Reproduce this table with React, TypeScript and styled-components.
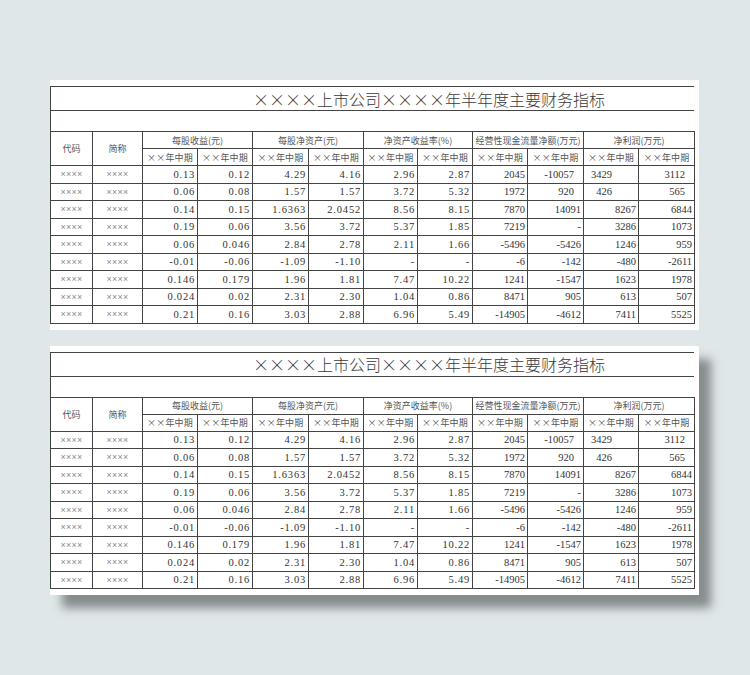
import React from "react";
import styled, { createGlobalStyle } from "styled-components";

const Global = createGlobalStyle`
  html, body { margin: 0; padding: 0; background: #e0e7e8; }
  body { width: 750px; height: 675px; overflow: hidden; }
`;

const Page = styled.div`
  display: flex;
  flex-direction: column;
  gap: 16px;
  padding: 80px 0 0 50px;
`;

const Card = styled.div<{ $shadow?: boolean }>`
  width: 649px;
  background: #ffffff;
  padding: 6px 5px 6px 0;
  box-sizing: border-box;
  box-shadow: ${(p) => (p.$shadow ? "12px 13px 9px rgba(45, 52, 52, 0.5)" : "none")};
`;

const TitleRow = styled.div`
  height: 25px;
  box-sizing: border-box;
  border-top: 1px solid #444;
  border-bottom: 1px solid #444;
  border-left: 1px solid #444;
  display: flex;
  align-items: center;
  padding-left: 202px;
  font-family: "Noto Sans CJK SC", sans-serif;
  font-weight: 300;
  font-size: 16px;
  color: #3a3a3a;
  white-space: nowrap;
`;

const BlankRow = styled.div`
  height: 20px;
  border-left: 1px solid #444;
`;

const cols = [42, 50, 55, 55, 56, 55, 54, 55, 55, 56, 55, 56];

const Grid = styled.div`
  display: grid;
  grid-template-columns: ${cols.map((c) => `${c}px`).join(" ")};
  grid-template-rows: 17px 17px repeat(9, 17.5px);
  border-top: 1px solid #444;
  border-left: 1px solid #444;
  width: max-content;
`;

const Cell = styled.div<{ $cspan?: number; $rspan?: number }>`
  box-sizing: border-box;
  border-right: 1px solid #444;
  border-bottom: 1px solid #444;
  display: flex;
  align-items: center;
  overflow: hidden;
  white-space: nowrap;
  grid-column: ${(p) => (p.$cspan ? `span ${p.$cspan}` : "auto")};
  grid-row: ${(p) => (p.$rspan ? `span ${p.$rspan}` : "auto")};
`;

const HeadCell = styled(Cell)`
  justify-content: center;
  font-family: "Noto Sans CJK SC", sans-serif;
  font-size: 9px;
  color: #555;
`;

const PeriodCell = styled(HeadCell)`
  letter-spacing: 0.2px;
`;

const MarkCell = styled(Cell)`
  justify-content: center;
  font-family: "Liberation Sans", sans-serif;
  font-size: 9px;
  color: #8a8a8a;
  letter-spacing: 0.3px;
`;

const NumCell = styled(Cell)<{ $dec?: boolean; $pad?: number }>`
  justify-content: flex-end;
  padding-right: ${(p) => p.$pad ?? 2}px;
  font-family: "Liberation Serif", serif;
  font-size: 10.5px;
  color: #333;
  letter-spacing: ${(p) => (p.$dec ? "0.8px" : "0")};
`;

const groups = [
  "每股收益(元)",
  "每股净资产(元)",
  "净资产收益率(%)",
  "经营性现金流量净额(万元)",
  "净利润(万元)",
];

const rows = [
  ["0.13", "0.12", "4.29", "4.16", "2.96", "2.87", "2045", "-10057", "3429", "3112"],
  ["0.06", "0.08", "1.57", "1.57", "3.72", "5.32", "1972", "920", "426", "565"],
  ["0.14", "0.15", "1.6363", "2.0452", "8.56", "8.15", "7870", "14091", "8267", "6844"],
  ["0.19", "0.06", "3.56", "3.72", "5.37", "1.85", "7219", "-", "3286", "1073"],
  ["0.06", "0.046", "2.84", "2.78", "2.11", "1.66", "-5496", "-5426", "1246", "959"],
  ["-0.01", "-0.06", "-1.09", "-1.10", "-", "-", "-6", "-142", "-480", "-2611"],
  ["0.146", "0.179", "1.96", "1.81", "7.47", "10.22", "1241", "-1547", "1623", "1978"],
  ["0.024", "0.02", "2.31", "2.30", "1.04", "0.86", "8471", "905", "613", "507"],
  ["0.21", "0.16", "3.03", "2.88", "6.96", "5.49", "-14905", "-4612", "7411", "5525"],
];

const padFor = (r: number, c: number): number | undefined => {
  if (r > 1) return undefined;
  if (c === 7) return 9;
  if (c === 8) return 26;
  if (c === 9) return 9;
  return undefined;
};

function FinanceTable({ shadow }: { shadow?: boolean }) {
  return (
    <Card $shadow={shadow}>
      <TitleRow>××××上市公司××××年半年度主要财务指标</TitleRow>
      <BlankRow />
      <Grid>
        <HeadCell $rspan={2}>代码</HeadCell>
        <HeadCell $rspan={2}>简称</HeadCell>
        {groups.map((g) => (
          <HeadCell key={g} $cspan={2}>
            {g}
          </HeadCell>
        ))}
        {Array.from({ length: 10 }).map((_, i) => (
          <PeriodCell key={`p${i}`}>××年中期</PeriodCell>
        ))}
        {rows.map((row, r) => (
          <React.Fragment key={r}>
            <MarkCell>××××</MarkCell>
            <MarkCell>××××</MarkCell>
            {row.map((v, c) => (
              <NumCell key={c} $dec={c < 6} $pad={padFor(r, c)}>
                {v}
              </NumCell>
            ))}
          </React.Fragment>
        ))}
      </Grid>
    </Card>
  );
}

export default function App() {
  return (
    <>
      <Global />
      <Page>
        <FinanceTable />
        <FinanceTable shadow />
      </Page>
    </>
  );
}
